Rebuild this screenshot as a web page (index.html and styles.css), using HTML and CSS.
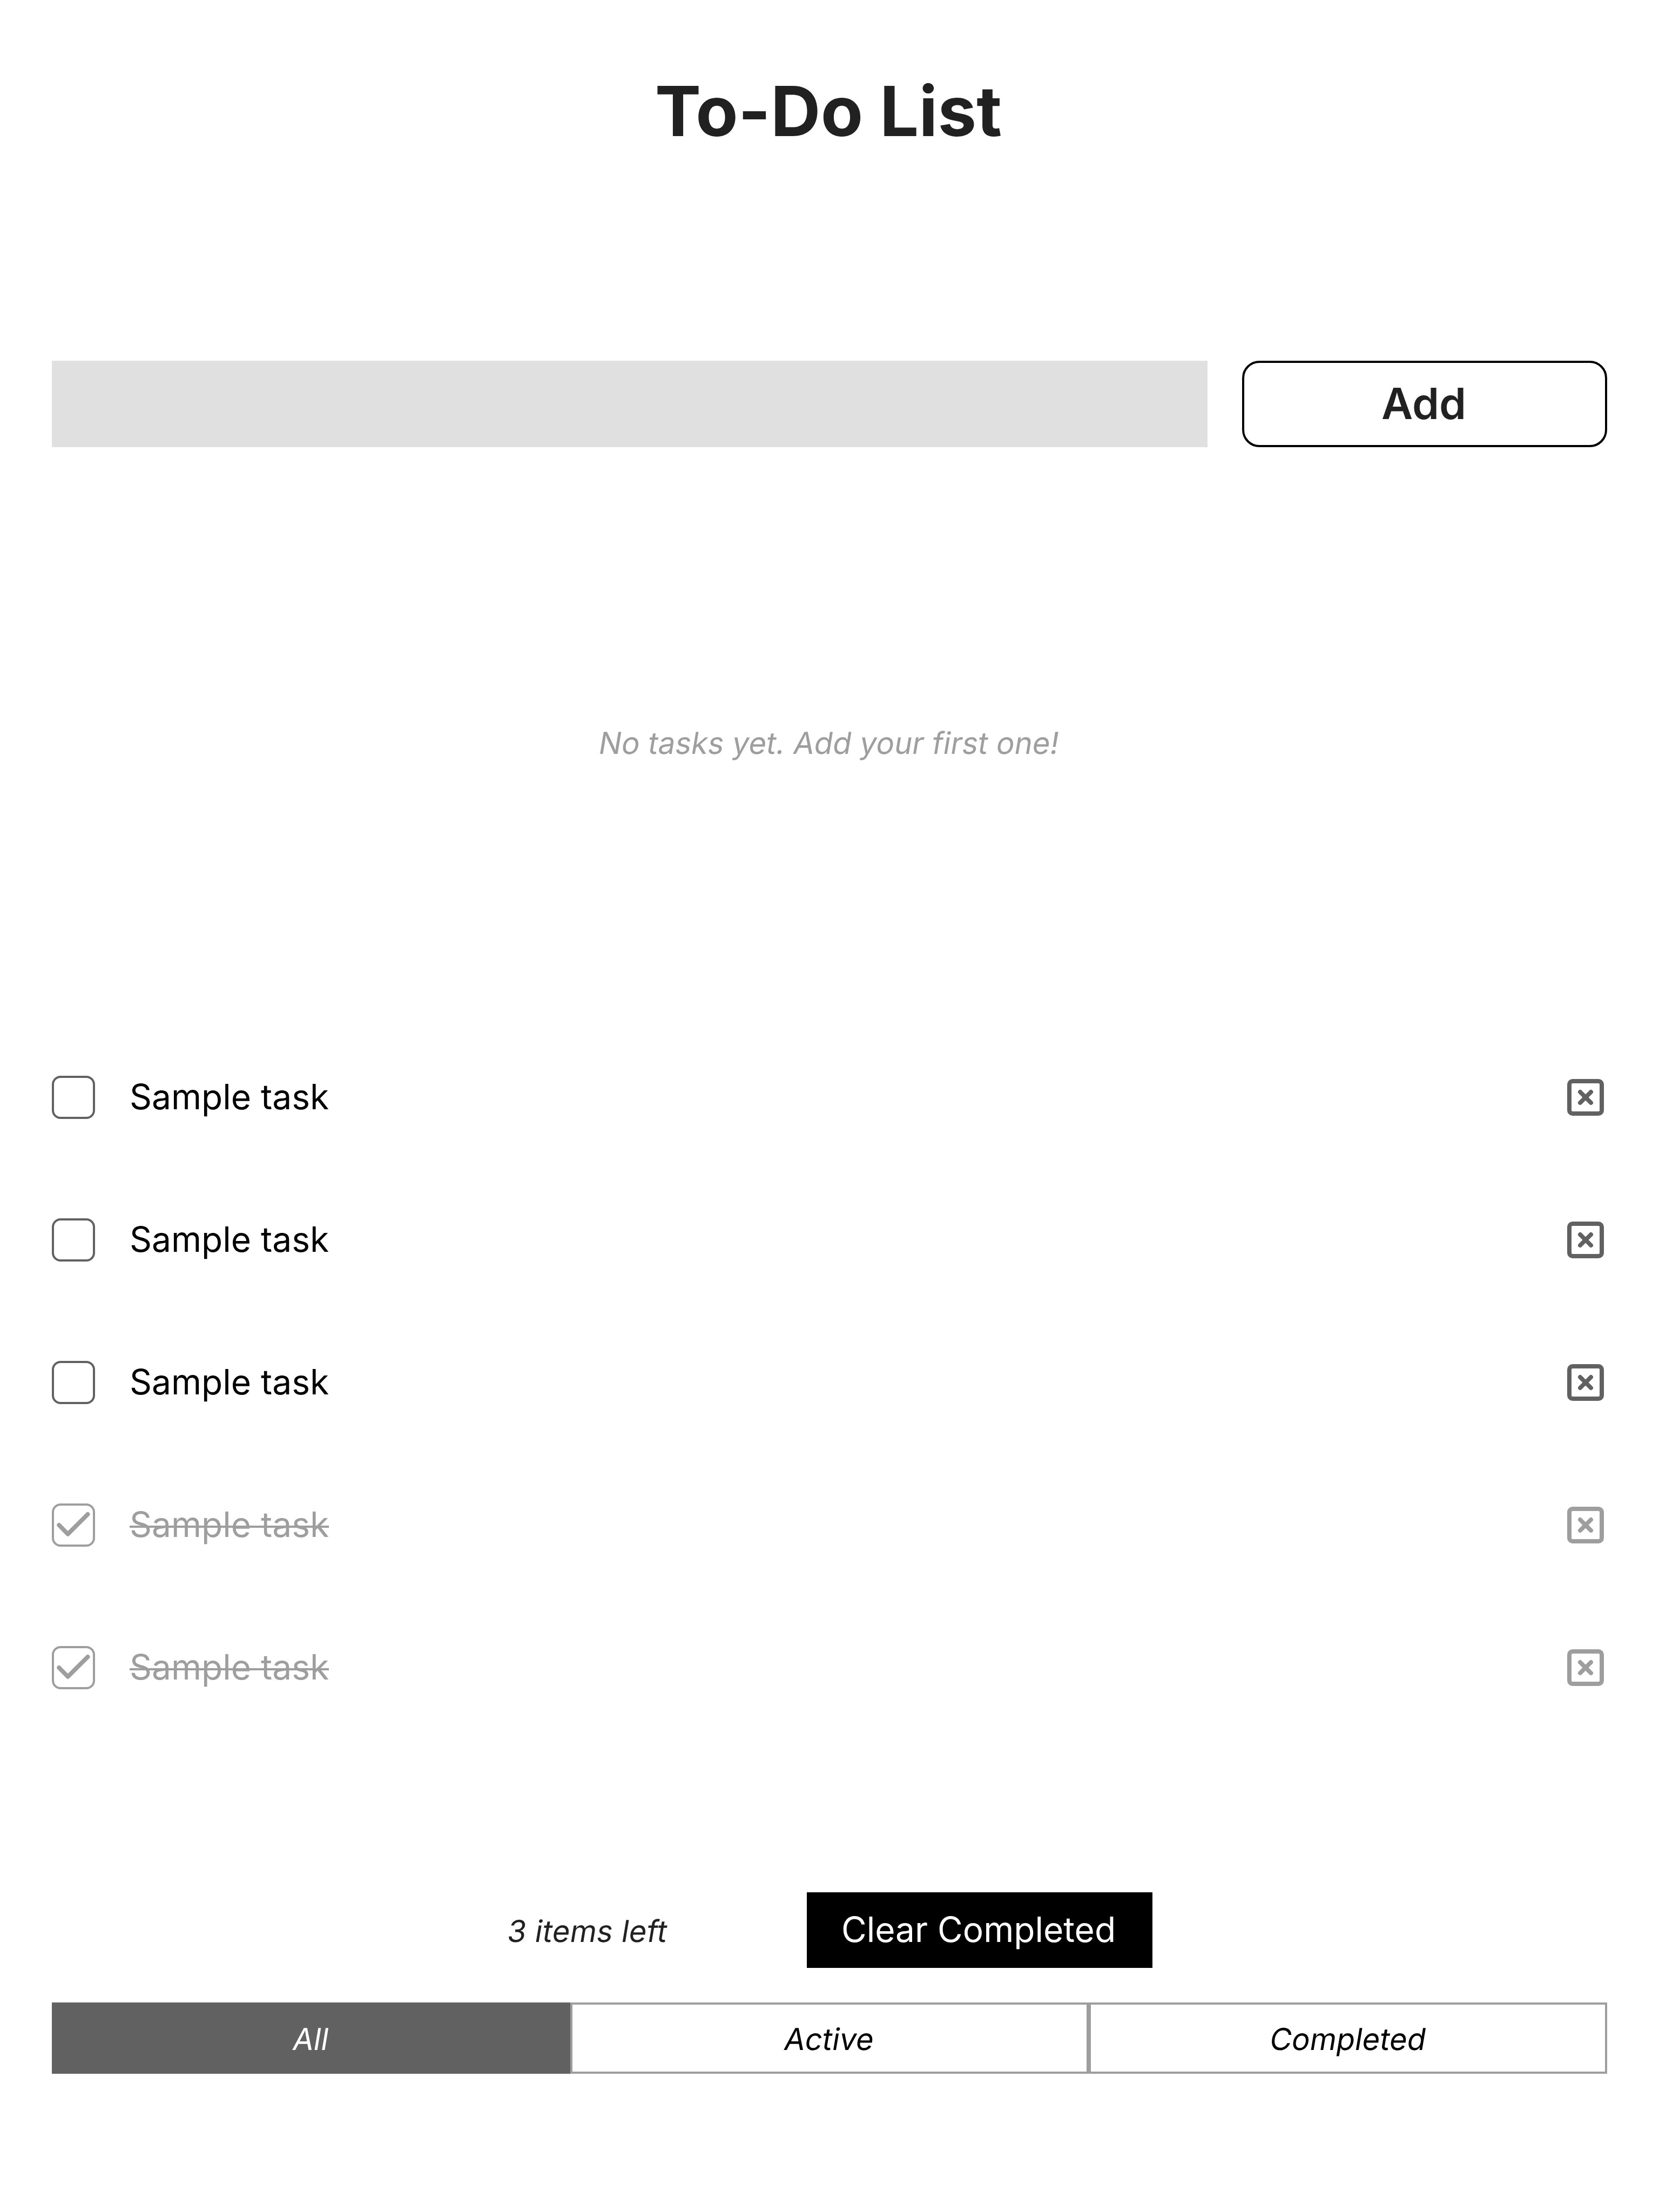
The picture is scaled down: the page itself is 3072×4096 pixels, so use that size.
FILE: index.html
```html
<!DOCTYPE html>
<html lang="en">
<head>
<meta charset="utf-8">
<title>To-Do List</title>
<link rel="stylesheet" href="styles.css">
</head>
<body>
<svg class="sprite" aria-hidden="true">
  <symbol id="icon-delete" viewBox="0 0 80 80">
    <rect x="10" y="10" width="60" height="60" rx="6"/>
    <path d="M30 30L50 50M50 30L30 50"/>
  </symbol>
  <symbol id="icon-check" viewBox="0 0 80 80">
    <path d="M13.3 40L29.7 56.7L66.5 20"/>
  </symbol>
</svg>
<main class="app">
  <h1 class="title">To-Do List</h1>
  <form class="entry">
    <input class="entry-input" type="text" aria-label="New task">
    <button class="entry-add" type="button">Add</button>
  </form>
  <p class="empty slanted">No tasks yet. Add your first one!</p>
  <ul class="tasks">
    <li class="task"><span class="checkbox"></span><span class="label">Sample task</span><svg class="delete"><use href="#icon-delete"/></svg></li>
    <li class="task"><span class="checkbox"></span><span class="label">Sample task</span><svg class="delete"><use href="#icon-delete"/></svg></li>
    <li class="task"><span class="checkbox"></span><span class="label">Sample task</span><svg class="delete"><use href="#icon-delete"/></svg></li>
    <li class="task done"><span class="checkbox"><svg class="check"><use href="#icon-check"/></svg></span><span class="label">Sample task</span><svg class="delete"><use href="#icon-delete"/></svg></li>
    <li class="task done"><span class="checkbox"><svg class="check"><use href="#icon-check"/></svg></span><span class="label">Sample task</span><svg class="delete"><use href="#icon-delete"/></svg></li>
  </ul>
  <div class="summary">
    <span class="count slanted">3 items left</span>
    <button class="clear" type="button">Clear Completed</button>
  </div>
  <nav class="filters">
    <button class="filter selected" type="button"><span class="slanted">All</span></button>
    <button class="filter" type="button"><span class="slanted">Active</span></button>
    <button class="filter" type="button"><span class="slanted">Completed</span></button>
  </nav>
</main>
</body>
</html>
```
FILE: styles.css
```css
* {
  box-sizing: border-box;
  margin: 0;
  padding: 0;
}

body {
  background: #fff;
  color: #000;
  font-family: Inter, "Liberation Sans", sans-serif;
}

button,
input {
  font: inherit;
  border: 0;
  border-radius: 0;
  background: none;
}

.sprite {
  display: none;
}

/* Oblique text: keeps the upright letterforms, leaning by 9.4 degrees */
.slanted {
  display: inline-block;
  font-size: 56px;
  line-height: 68px;
  transform: skewX(-9.4deg);
}

.app {
  display: flex;
  flex-direction: column;
  width: 3072px;
  height: 4096px;
  padding: 128px 96px 0;
}

.title {
  height: 156px;
  padding-right: 4px;
  color: #212121;
  font-size: 128px;
  font-weight: 700;
  letter-spacing: 0.2px;
  line-height: 156px;
  text-align: center;
}

.entry {
  display: flex;
  gap: 64px;
  height: 160px;
  margin-top: 384px;
}

.entry-input {
  width: 2140px;
  background: #e0e0e0;
}

.entry-add {
  flex: 1;
  padding: 0 3px 3px 0;
  border: 4px solid #000;
  border-radius: 32px;
  color: #212121;
  font-size: 80px;
  font-weight: 600;
}

.empty {
  height: 68px;
  margin-top: 514px;
  padding-right: 1px;
  color: #9e9e9e;
  text-align: center;
}

.tasks {
  display: flex;
  flex-direction: column;
  gap: 184px;
  margin-top: 582px;
  list-style: none;
}

.task {
  display: flex;
  align-items: center;
  gap: 64px;
  height: 80px;
  color: #616161;
}

.checkbox {
  display: flex;
  width: 80px;
  height: 80px;
  border: 4px solid currentColor;
  border-radius: 16px;
}

.check {
  flex: none;
  width: 80px;
  height: 80px;
  margin: -4px;
  fill: none;
  stroke: currentColor;
  stroke-width: 8;
  stroke-linecap: round;
  stroke-linejoin: round;
}

.label {
  height: 80px;
  color: #000;
  font-size: 64px;
  line-height: 78px;
}

.delete {
  width: 80px;
  height: 80px;
  margin-left: auto;
  fill: none;
  stroke: currentColor;
  stroke-width: 8;
  stroke-linecap: round;
}

.done {
  color: #9e9e9e;
}

/* Strike line drawn as a 4px band across the label */
.done .label {
  color: inherit;
  background: linear-gradient(currentColor, currentColor) 0 41px / 100% 4px no-repeat;
}

.summary {
  display: flex;
  align-items: center;
  justify-content: center;
  gap: 256px;
  height: 140px;
  margin-top: 376px;
}

.count {
  width: 300px;
  padding: 4px 0 0 3px;
  color: #212121;
  letter-spacing: 0.3px;
  white-space: nowrap;
}

.clear {
  width: 640px;
  height: 140px;
  padding: 0 4px 2px 0;
  background: #000;
  color: #fff;
  font-size: 64px;
  line-height: 78px;
}

.filters {
  display: grid;
  grid-template-columns: repeat(3, 1fr);
  height: 132px;
  margin-top: 64px;
}

.filter {
  padding-top: 3px;
  border: 4px solid #9e9e9e;
  color: #000;
  line-height: 0;
}

.selected {
  border-color: #616161;
  background: #616161;
  color: #fff;
}
```
